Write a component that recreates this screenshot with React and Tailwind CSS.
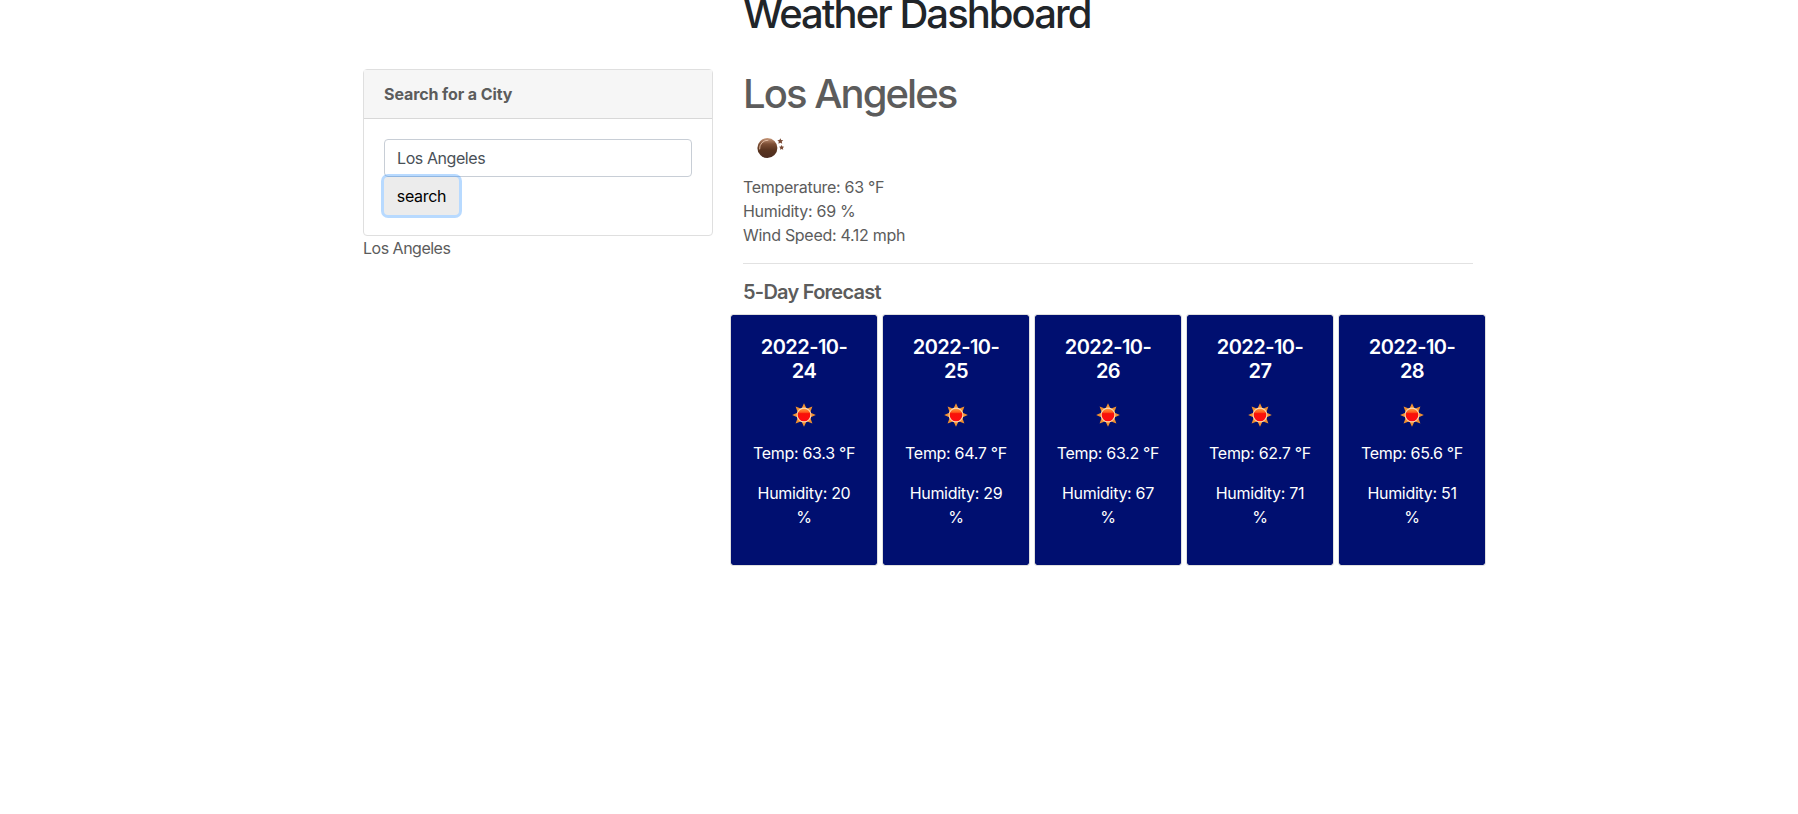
const days = [
  { date: "2022-10-24", temp: "63.3", humidity: 20 },
  { date: "2022-10-25", temp: "64.7", humidity: 29 },
  { date: "2022-10-26", temp: "63.2", humidity: 67 },
  { date: "2022-10-27", temp: "62.7", humidity: 71 },
  { date: "2022-10-28", temp: "65.6", humidity: 51 },
];

function SunIcon() {
  return (
    <svg className="block h-6 w-6" viewBox="0 0 24 24">
      <defs>
        <linearGradient id="sunDisc" x1="0" y1="0" x2="0" y2="1">
          <stop offset="0" stopColor="#ffa63f" />
          <stop offset="0.3" stopColor="#ff5a1e" />
          <stop offset="0.4" stopColor="#f81208" />
          <stop offset="1" stopColor="#ff0a14" />
        </linearGradient>
      </defs>
      <path
        fill="#f0902f"
        d="M12 .2 14.6 5.8 20.4 3.6 18.2 9.4 23.8 12 18.2 14.6 20.4 20.4 14.6 18.2 12 23.8 9.4 18.2 3.6 20.4 5.8 14.6 .2 12 5.8 9.4 3.6 3.6 9.4 5.8Z"
      />
      <circle cx="12" cy="12" r="6.9" fill="url(#sunDisc)" stroke="#fbd9b0" strokeWidth="1.1" />
    </svg>
  );
}

function MoonIcon() {
  return (
    <svg className="block h-6 w-8" viewBox="0 0 32 24">
      <defs>
        <linearGradient id="moonDisc" x1="0" y1="0" x2="0" y2="1">
          <stop offset="0" stopColor="#c99a7c" />
          <stop offset="0.3" stopColor="#7d4f35" />
          <stop offset="0.6" stopColor="#59341f" />
          <stop offset="1" stopColor="#4c2c20" />
        </linearGradient>
      </defs>
      <circle cx="12.4" cy="12" r="10" fill="url(#moonDisc)" />
      <path d="M4.6 13A8 8 0 0 1 13 4.2" fill="none" stroke="#e0bba2" strokeWidth="1" strokeLinecap="round" />
      <path fill="#7a4a35" d="m25.3 2.3.9 1.7 2.1.2-1.5 1.4.4 2.1-1.9-1-1.9 1 .4-2.1-1.5-1.4 2.1-.2Z" />
      <path fill="#7a4a35" d="m26.6 8.9.8 1.5 1.8.3-1.3 1.2.3 1.8-1.6-.8-1.6.8.3-1.8-1.3-1.2 1.8-.3Z" />
    </svg>
  );
}

function ForecastCard({ date, temp, humidity }) {
  return (
    <div className="flex h-[252px] w-37 flex-col items-center rounded-[3px] border border-[#dfdfdf] bg-[#000f70] bg-clip-padding pt-5 text-center text-white">
      <h5 className="w-24 text-xl leading-6 font-semibold tracking-[-0.55px]">{date}</h5>
      <div className="mt-5">
        <SunIcon />
      </div>
      <p className="mt-[14px] tracking-[-0.3px] whitespace-nowrap">Temp: {temp} °F</p>
      <p className="mt-4 w-[106px] tracking-[-0.3px]">Humidity: {humidity} %</p>
    </div>
  );
}

export default function App() {
  return (
    <div className="h-[814px] overflow-hidden bg-white font-['Inter',sans-serif] text-base leading-6 text-[#5c5c5c]">
      <h1 className="-mt-[10px] ml-[743px] text-[40px] leading-12 font-[550] tracking-[-1.95px] text-[#212529]">
        Weather Dashboard
      </h1>
      <main className="mt-[31px] ml-[363px] flex w-[1125px]">
        <aside className="w-[350px] shrink-0">
          <section className="rounded border border-[#dfdfdf]">
            <h2 className="border-b border-[#d8d8d8] bg-[#f6f6f6] px-5 py-3 font-bold tracking-[-0.1px]">
              Search for a City
            </h2>
            <div className="p-5">
              <input
                className="block h-[38px] w-full rounded border border-[#c8ced6] px-3 tracking-[-0.42px] text-[#495057] outline-none"
                defaultValue="Los Angeles"
              />
              <button className="relative block h-[38px] w-[75px] rounded bg-[#ececec] tracking-[-0.3px] text-black shadow-[0_0_0_3px_rgba(0,123,255,0.28)]">
                search
              </button>
            </div>
          </section>
          <p className="tracking-[-0.5px]">Los Angeles</p>
        </aside>
        <section className="ml-[30px] w-[730px]">
          <h2 className="pt-px text-[40px] leading-12 font-[550] tracking-[-1.95px]">Los Angeles</h2>
          <div className="mt-[18px] ml-3">
            <MoonIcon />
          </div>
          <div className="mt-[15px] tracking-[-0.3px]">
            <p>Temperature: 63 °F</p>
            <p>Humidity: 69 %</p>
            <p>Wind Speed: 4.12 mph</p>
          </div>
          <hr className="mt-4 border-t border-[#e2e2e2]" />
          <h3 className="mt-4 text-xl leading-6 font-semibold tracking-[-0.75px]">5-Day Forecast</h3>
          <div className="mt-[10px] -ml-[13px] flex w-[756px] gap-1">
            {days.map((day) => (
              <ForecastCard key={day.date} {...day} />
            ))}
          </div>
        </section>
      </main>
    </div>
  );
}
